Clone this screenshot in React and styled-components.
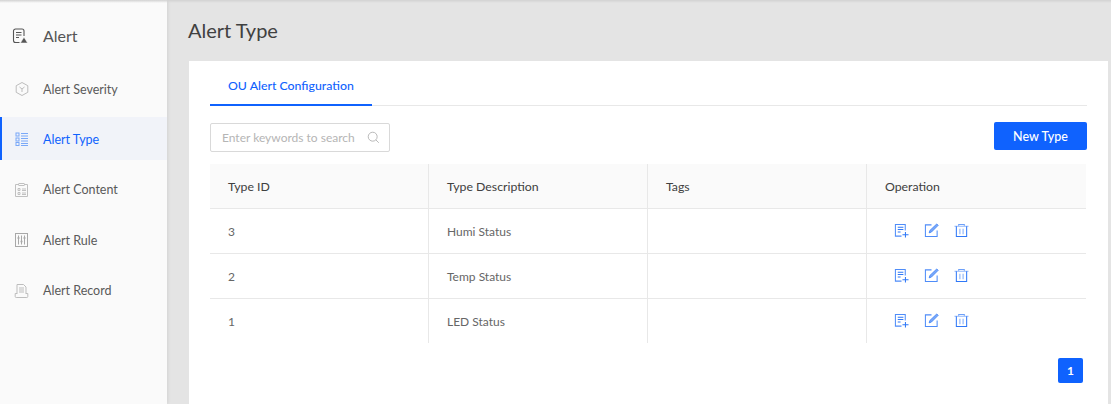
import React from 'react'
import styled, { createGlobalStyle } from 'styled-components'

const FONT = 'Lato, "Noto Sans", sans-serif'
const BLUE = '#0f62fe'

const Global = createGlobalStyle`
  html, body {
    margin: 0;
    padding: 0;
    height: 404px;
    overflow: hidden;
    background: #e4e4e4;
    font-family: ${FONT};
  }
`

const Page = styled.div`
  display: flex;
  height: 404px;
  width: 1111px;
  overflow: hidden;
  position: relative;
  &::before {
    content: '';
    position: absolute;
    top: 0;
    left: 0;
    right: 0;
    height: 3px;
    background: linear-gradient(#d2d2d2, rgba(210, 210, 210, 0));
    z-index: 2;
  }
`

const Sidebar = styled.aside`
  width: 167px;
  flex-shrink: 0;
  background: #fafafa;
  box-shadow: 1px 0 3px rgba(0, 0, 0, 0.08);
`

const SideTitle = styled.div`
  display: flex;
  align-items: center;
  height: 37px;
  margin-top: 17px;
  margin-bottom: 13px;
  padding-left: 12px;
  font-size: 16px;
  color: #555;
  svg { margin-right: 15px; }
`

const SideItem = styled.div`
  display: flex;
  align-items: center;
  box-sizing: border-box;
  height: 43px;
  margin-bottom: 7.4px;
  padding-top: 1px;
  padding-left: ${(p) => (p.$active ? '12px' : '14px')};
  font-size: 12.5px;
  color: ${(p) => (p.$active ? BLUE : '#595959')};
  background: ${(p) => (p.$active ? '#f1f3f9' : 'transparent')};
  border-left: ${(p) => (p.$active ? `2px solid ${BLUE}` : 'none')};
  svg { margin-right: 13px; }
`

const Main = styled.main`
  flex: 1;
  padding: 0 3px 0 22px;
  min-width: 0;
`

const Heading = styled.h1`
  margin: 0 0 0 -1px;
  height: 61px;
  line-height: 60px;
  font-size: 20px;
  font-weight: 400;
  color: #404040;
`

const Card = styled.section`
  background: #fff;
  height: 343px;
  padding: 0 21px;
`

const Tabs = styled.div`
  display: flex;
  height: 44px;
  border-bottom: 1px solid #e8e8e8;
`

const Tab = styled.div`
  width: 162px;
  height: 45px;
  box-sizing: border-box;
  border-bottom: 2px solid ${BLUE};
  color: ${BLUE};
  font-size: 12.3px;
  font-weight: 500;
  line-height: 49px;
  padding-left: 18px;
  white-space: nowrap;
`

const Toolbar = styled.div`
  display: flex;
  justify-content: space-between;
  align-items: flex-start;
  padding-top: 16px;
  height: 42px;
`

const Search = styled.div`
  display: flex;
  align-items: center;
  justify-content: space-between;
  box-sizing: border-box;
  width: 180px;
  height: 29px;
  margin-top: 1px;
  padding: 0 9px 0 11px;
  border: 1px solid #d9d9d9;
  border-radius: 2px;
  font-size: 12px;
  color: #b5b5b5;
  white-space: nowrap;
`

const Button = styled.button`
  width: 93px;
  height: 28px;
  border: 0;
  border-radius: 2px;
  background: ${BLUE};
  color: #fff;
  font: 500 12.5px ${FONT};
`

const Grid = styled.div`
  display: grid;
  grid-template-columns: 218px 219px 219px 220px;
`

const HeadCell = styled.div`
  height: 44px;
  line-height: 46px;
  padding-left: 18px;
  background: #fafafa;
  border-bottom: 1px solid #e8e8e8;
  border-left: ${(p) => (p.$first ? '0' : '1px solid #e8e8e8')};
  font-size: 12.3px;
  font-weight: 400;
  color: #404040;
`

const Cell = styled.div`
  display: flex;
  align-items: center;
  box-sizing: border-box;
  height: ${(p) => (p.$last ? '44px' : '45px')};
  padding-left: 18px;
  border-bottom: ${(p) => (p.$last ? '0' : '1px solid #e8e8e8')};
  border-left: ${(p) => (p.$first ? '0' : '1px solid #e8e8e8')};
  font-size: 12px;
  color: #666;
`

const Ops = styled.div`
  display: flex;
  gap: 15px;
  margin: -2px 0 0 9px;
`

const Pager = styled.div`
  display: flex;
  justify-content: flex-end;
  padding: 15px 4px 0 0;
`

const PageNum = styled.div`
  width: 25px;
  height: 25px;
  line-height: 25px;
  text-align: center;
  border-radius: 2px;
  background: ${BLUE};
  color: #fff;
  font-size: 12px;
  font-weight: 700;
`

const Ico = ({ children, size = 16, color = '#a6a6a6', sw = 1 }) => (
  <svg width={size} height={size} viewBox='0 0 16 16' fill='none' stroke={color} strokeWidth={sw}>
    {children}
  </svg>
)

const TitleIcon = () => (
  <Ico color='#555' sw={1.1}>
    <path d='M7.5 14.5H3.5a2 2 0 0 1-2-2V3a2 2 0 0 1 2-2h6.5a2 2 0 0 1 2 2v5' />
    <path d='M4 4.5h5.5M4 7h5.5M4 9.5h3' />
    <path d='M12 9.2l3.6 5.8H8.4z' fill='#555' stroke='#fafafa' strokeWidth='0.5' />
  </Ico>
)

const SeverityIcon = () => (
  <Ico color='#bdbdbd'>
    <path d='M8 1.5l5.8 3.2v6.6L8 14.5l-5.8-3.2V4.7z' />
    <path d='M5.5 6L8 8l2.5-2M8 8v3' />
  </Ico>
)

const TypeIcon = () => (
  <Ico color='#7aa8f8'>
    <rect x='2' y='2' width='3' height='3' />
    <rect x='2' y='7' width='3' height='3' />
    <rect x='2' y='11.5' width='3' height='3' />
    <path d='M7 2.5h7M7 5h7M7 7.5h7M7 10h7M7 12.5h7M7 14.5h7' />
  </Ico>
)

const ContentIcon = () => (
  <Ico color='#c0c0c0'>
    <path d='M5 2.5H1.5v12h12v-12H10' />
    <rect x='5' y='1.5' width='5' height='2' />
    <path d='M4 6.5h2v2H4zM4 10.5h2v2H4zM8 7h4M8 8.5h4M8 11h4M8 12.5h4' />
  </Ico>
)

const RuleIcon = () => (
  <Ico color='#a8a8a8'>
    <rect x='1.5' y='1.5' width='12' height='13' />
    <path d='M4.5 3.5v9M7.5 3.5v9M10.5 3.5v9' />
    <path d='M3.5 6h2M6.5 9.5h2M9.5 6h2' strokeWidth='1.5' />
  </Ico>
)

const RecordIcon = () => (
  <Ico color='#bdbdbd'>
    <path d='M3 11V1.5h6.5L12 4v7' />
    <path d='M5 5h5M5 7h5M5 9h5' />
    <path d='M3 10.5H1.2v3a1 1 0 0 0 1 1h10.6a1 1 0 0 0 1-1v-3H12' />
  </Ico>
)

const SearchIcon = () => (
  <Ico size={13} color='#aaa'>
    <circle cx='7' cy='7' r='5.5' />
    <path d='M11 11l3.5 3.5' />
  </Ico>
)

const AddDocIcon = () => (
  <Ico size={15} color='#2f78f7' sw={1.1}>
    <path d='M8 14H1.5V1.5H12V8' opacity='0.85' />
    <path d='M4 4.5h6M4 7h6M4 9.5h3' />
    <path d='M9 12.5h6.5M12.2 9.5v6' />
  </Ico>
)

const EditIcon = () => (
  <Ico size={15} color='#2f78f7' sw={1.1}>
    <path d='M8 2H1.5v12.5H14V8' opacity='0.85' />
    <path d='M5.5 10.5l.8-2.6L13.6 1l1.5 1.5-7.2 7.2z' fill='#7aa8f8' strokeWidth='0.8' />
  </Ico>
)

const TrashIcon = () => (
  <Ico size={15} color='#2f78f7' sw={1.1}>
    <path d='M.5 3.5h15' opacity='0.5' />
    <path d='M5 3V1.5h6V3' opacity='0.7' />
    <path d='M2.5 3.5v11h11v-11' />
    <path d='M6.3 6v6M9.7 6v6' opacity='0.6' />
  </Ico>
)

const menu = [
  { label: 'Alert Severity', icon: <SeverityIcon /> },
  { label: 'Alert Type', icon: <TypeIcon />, active: true },
  { label: 'Alert Content', icon: <ContentIcon /> },
  { label: 'Alert Rule', icon: <RuleIcon /> },
  { label: 'Alert Record', icon: <RecordIcon /> }
]

const rows = [
  { id: 3, desc: 'Humi Status' },
  { id: 2, desc: 'Temp Status' },
  { id: 1, desc: 'LED Status' }
]

const App = () => (
  <Page>
    <Global />
    <Sidebar>
      <SideTitle><TitleIcon />Alert</SideTitle>
      {menu.map((m) => (
        <SideItem key={m.label} $active={m.active}>{m.icon}{m.label}</SideItem>
      ))}
    </Sidebar>
    <Main>
      <Heading>Alert Type</Heading>
      <Card>
        <Tabs><Tab>OU Alert Configuration</Tab></Tabs>
        <Toolbar>
          <Search>Enter keywords to search<SearchIcon /></Search>
          <Button>New Type</Button>
        </Toolbar>
        <Grid>
          <HeadCell $first>Type ID</HeadCell>
          <HeadCell>Type Description</HeadCell>
          <HeadCell>Tags</HeadCell>
          <HeadCell>Operation</HeadCell>
          {rows.map((r, i) => {
            const last = i === rows.length - 1
            return (
              <React.Fragment key={r.id}>
                <Cell $first $last={last}>{r.id}</Cell>
                <Cell $last={last}>{r.desc}</Cell>
                <Cell $last={last} />
                <Cell $last={last}><Ops><AddDocIcon /><EditIcon /><TrashIcon /></Ops></Cell>
              </React.Fragment>
            )
          })}
        </Grid>
        <Pager><PageNum>1</PageNum></Pager>
      </Card>
    </Main>
  </Page>
)

export default App
